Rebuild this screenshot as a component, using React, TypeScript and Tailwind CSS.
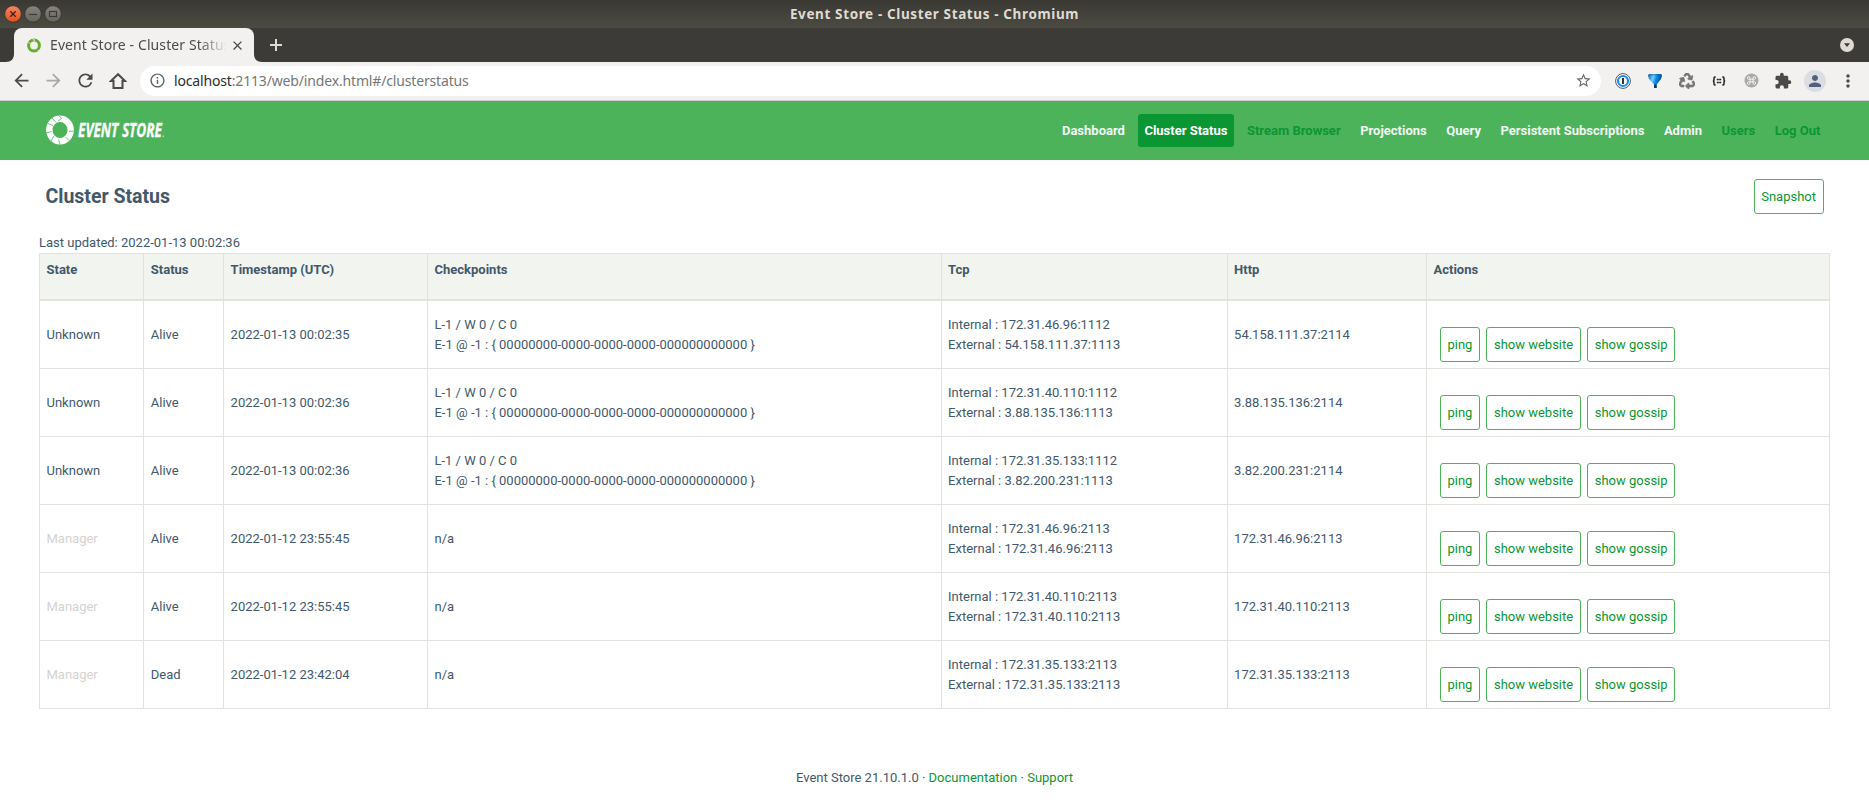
import React from "react";
import { FaRecycle } from "react-icons/fa";
import {
  MdArrowBack,
  MdArrowForward,
  MdClose,
  MdExtension,
  MdInfoOutline,
  MdMoreVert,
  MdPerson,
  MdRefresh,
  MdStarBorder,
} from "react-icons/md";

interface NodeRow {
  state: string;
  status: string;
  timestamp: string;
  checkpoints: string[];
  internal: string;
  external: string;
  http: string;
}

const epoch = "E-1 @ -1 : { 00000000-0000-0000-0000-000000000000 }";

const rows: NodeRow[] = [
  {
    state: "Unknown",
    status: "Alive",
    timestamp: "2022-01-13 00:02:35",
    checkpoints: ["L-1 / W 0 / C 0", epoch],
    internal: "172.31.46.96:1112",
    external: "54.158.111.37:1113",
    http: "54.158.111.37:2114",
  },
  {
    state: "Unknown",
    status: "Alive",
    timestamp: "2022-01-13 00:02:36",
    checkpoints: ["L-1 / W 0 / C 0", epoch],
    internal: "172.31.40.110:1112",
    external: "3.88.135.136:1113",
    http: "3.88.135.136:2114",
  },
  {
    state: "Unknown",
    status: "Alive",
    timestamp: "2022-01-13 00:02:36",
    checkpoints: ["L-1 / W 0 / C 0", epoch],
    internal: "172.31.35.133:1112",
    external: "3.82.200.231:1113",
    http: "3.82.200.231:2114",
  },
  {
    state: "Manager",
    status: "Alive",
    timestamp: "2022-01-12 23:55:45",
    checkpoints: ["n/a"],
    internal: "172.31.46.96:2113",
    external: "172.31.46.96:2113",
    http: "172.31.46.96:2113",
  },
  {
    state: "Manager",
    status: "Alive",
    timestamp: "2022-01-12 23:55:45",
    checkpoints: ["n/a"],
    internal: "172.31.40.110:2113",
    external: "172.31.40.110:2113",
    http: "172.31.40.110:2113",
  },
  {
    state: "Manager",
    status: "Dead",
    timestamp: "2022-01-12 23:42:04",
    checkpoints: ["n/a"],
    internal: "172.31.35.133:2113",
    external: "172.31.35.133:2113",
    http: "172.31.35.133:2113",
  },
];

const navItems = [
  { name: "Dashboard", style: "text-[#f1f9f2]" },
  { name: "Cluster Status", style: "bg-[#0a9632] text-white" },
  { name: "Stream Browser", style: "text-[#0a9632]" },
  { name: "Projections", style: "text-[#f1f9f2]" },
  { name: "Query", style: "text-[#f1f9f2]" },
  { name: "Persistent Subscriptions", style: "text-[#f1f9f2]" },
  { name: "Admin", style: "text-[#f1f9f2]" },
  { name: "Users", style: "text-[#0a9632]" },
  { name: "Log Out", style: "text-[#0a9632]" },
];

const columns = ["State", "Status", "Timestamp (UTC)", "Checkpoints", "Tcp", "Http", "Actions"];

const gridCols = "grid grid-cols-[104.3px_79.8px_203.9px_513.6px_286px_199.4px_403px]";

const WindowBar = () => (
  <div className="h-7 flex items-center bg-linear-to-b from-[#393833] to-[#4c4b43] relative">
    <svg width="64" height="28" viewBox="0 0 64 28">
      <defs>
        <linearGradient id="close" x1="0" y1="0" x2="0" y2="1">
          <stop offset="0" stopColor="#f58763" />
          <stop offset="1" stopColor="#e24f1c" />
        </linearGradient>
        <linearGradient id="plain" x1="0" y1="0" x2="0" y2="1">
          <stop offset="0" stopColor="#86847c" />
          <stop offset="1" stopColor="#65635c" />
        </linearGradient>
      </defs>
      <circle cx="13" cy="14" r="8.3" fill="url(#close)" stroke="#33322e" strokeWidth="0.8" />
      <path d="M10.3 11.3l5.4 5.4M15.7 11.3l-5.4 5.4" stroke="#45200f" strokeWidth="1.3" />
      <circle cx="33" cy="14" r="8.3" fill="url(#plain)" stroke="#33322e" strokeWidth="0.8" />
      <path d="M29 14.5h8" stroke="#3b3a36" strokeWidth="1.1" />
      <circle cx="53" cy="14" r="8.3" fill="url(#plain)" stroke="#33322e" strokeWidth="0.8" />
      <rect x="49.5" y="11.5" width="7" height="5" fill="none" stroke="#3b3a36" strokeWidth="1.1" />
    </svg>
    <div className="absolute inset-0 flex items-center justify-center font-['Noto_Sans'] font-bold text-[13.5px] tracking-[0.62px] text-[#dfdbd2]">
      Event Store - Cluster Status - Chromium
    </div>
  </div>
);

const TabStrip = () => (
  <div className="h-[34px] bg-[#3c3b37] flex items-end">
    <svg width="14" height="8" viewBox="0 0 14 8">
      <path d="M14 0v8H6c5 0 8-3 8-8z" fill="#f2f1f0" />
    </svg>
    <div className="w-[240px] h-[34px] rounded-t-[8px] bg-[#f2f1f0] flex items-center pl-[13px]">
      <svg width="14" height="16" viewBox="0 0 14 16">
        <circle cx="7" cy="8.5" r="5.4" fill="none" stroke="#67ad2b" strokeWidth="3" />
        <path d="M5 1.6l3 1.5-2 1.4M1 5.5l2.6 1M10.8 12.5l1.2 1.6" stroke="#f2f1f0" strokeWidth="0.7" fill="none" />
      </svg>
      <div className="ml-[9px] mb-[2px] w-[176px] overflow-hidden whitespace-nowrap font-['Noto_Sans'] text-[14px] tracking-[0.1px] text-[#4c4c4c] [mask-image:linear-gradient(to_right,black_148px,transparent_177px)]">
        Event Store - Cluster Status
      </div>
      <MdClose className="ml-[4px] text-[#4a4a4a]" size={15} />
    </div>
    <svg width="8" height="8" viewBox="0 0 8 8">
      <path d="M0 0v8h8C3 8 0 5 0 0z" fill="#f2f1f0" />
    </svg>
    <svg className="mb-[11px] ml-2" width="12" height="12" viewBox="0 0 12 12">
      <path d="M6 0v12M0 6h12" stroke="#dfdbd2" strokeWidth="2" />
    </svg>
    <svg className="ml-auto mr-[15px] mb-[10px]" width="14" height="14" viewBox="0 0 14 14">
      <circle cx="7" cy="7" r="7" fill="#dfdbd2" />
      <path d="M4 5.2h6L7 9z" fill="#3c3b37" />
    </svg>
  </div>
);

const Toolbar = () => (
  <div className="h-[39px] bg-[#f2f1f0] border-b border-[#cfcecc] flex items-center pb-px text-[#4a4a4a]">
    <MdArrowBack className="ml-[11px]" size={21} />
    <MdArrowForward className="ml-[11px] text-[#a9a8a7]" size={21} />
    <MdRefresh className="ml-[11px]" size={21} />
    <svg className="ml-[13px]" width="18" height="18" viewBox="0 0 18 18">
      <path d="M9 2.2L2 9h2.5v7h9V9H16z" fill="none" stroke="#4a4a4a" strokeWidth="2" />
    </svg>
    <div className="ml-[13px] w-[1461px] h-[30px] rounded-full bg-white flex items-center">
      <MdInfoOutline className="ml-[9px] text-[#5f6368]" size={17} />
      <div className="ml-[8px] font-['Noto_Sans'] text-[14px] tracking-[-0.16px] text-[#767676]">
        <span className="text-[#2b2b2b]">localhost</span>:2113/web/index.html#/clusterstatus
      </div>
      <MdStarBorder className="ml-auto mr-[9px] text-[#6a6a6a]" size={17} />
    </div>
    <svg className="ml-[14px]" width="16" height="16" viewBox="0 0 16 16">
      <circle cx="8" cy="8" r="7.4" fill="#fff" stroke="#56595c" strokeWidth="1" />
      <circle cx="8" cy="8" r="5" fill="#fff" stroke="#1a8cff" strokeWidth="2.2" />
      <rect x="7" y="5" width="2" height="6" fill="#333" />
    </svg>
    <svg className="ml-4" width="16" height="16" viewBox="0 0 16 16">
      <defs>
        <linearGradient id="gem" x1="0" y1="0" x2="1" y2="0.3">
          <stop offset="0" stopColor="#0a5fb4" />
          <stop offset="0.4" stopColor="#6fd0ff" />
          <stop offset="0.62" stopColor="#0d8df0" />
          <stop offset="1" stopColor="#05407f" />
        </linearGradient>
      </defs>
      <path d="M2.5 1h11q1.500 0 1.500 1.700L14 6l-4.300 5.500V15H7v-3.500L2 6 1 2.700Q1 1 2.500 1z" fill="url(#gem)" />
      <path d="M2.500 1h11L15 2.500H1z" fill="#0b3e77" opacity="0.35" />
      <path d="M7.200 11.500h2.300V15H7.200z" fill="#14304f" />
    </svg>
    <FaRecycle className="ml-4 text-[#767676] stroke-[#767676] [stroke-width:22px]" size={16} />
    <svg className="ml-[17px]" width="14" height="10" viewBox="0 0 14 10" fill="none" stroke="#222">
      <path
        d="M3.7 1H2.9Q2 1 2 2v2Q2 5 .8 5 2 5 2 6v2Q2 9 2.9 9h.8M10.3 1h.8Q12 1 12 2v2q0 1 1.2 1Q12 5 12 6v2q0 1-.9 1h-.8"
        strokeWidth="1.5"
      />
      <path d="M4.8 3.5h4.4M4.8 6.5h4.4" strokeWidth="1.4" strokeDasharray="2 .4" />
    </svg>
    <svg className="ml-[18px]" width="15" height="15" viewBox="0 0 15 15">
      <circle cx="7.5" cy="7.5" r="7" fill="#a9a9a9" />
      <path
        d="M6 6V5a1.300 1.300 0 1 0-1.300 1.200h5.600A1.300 1.300 0 1 0 9 5v5a1.300 1.300 0 1 0 1.300-1.200H4.700A1.300 1.300 0 1 0 6 10z"
        fill="none"
        stroke="#f2f1f0"
        strokeWidth="1"
      />
    </svg>
    <MdExtension className="ml-[15px]" size={18} />
    <div className="ml-[12px] size-[22px] rounded-full bg-[#dadde3] flex items-center justify-center">
      <MdPerson className="text-[#526079]" size={18} />
    </div>
    <MdMoreVert className="ml-[12px]" size={20} />
  </div>
);

const Logo = () => (
  <svg className="mb-[2px] overflow-visible" width="122" height="32" viewBox="0 0 122 32">
    <ellipse cx="15" cy="16" rx="10.7" ry="11.2" fill="none" stroke="#fff" strokeWidth="6.4" />
    <path
      d="M7 4l4 4.500M3 9.500l5 2M1 19l5.500-1.500M6 27l3-5M15 30.500l-1.500-5M24 26.500l-3.500-3.500M28.500 17l-4.500.5M13.500 1l3 3.500-3.500 2.500"
      fill="none"
      stroke="#4db35b"
      strokeWidth="0.8"
    />
    <text
      x="33"
      y="23"
      textLength="84"
      lengthAdjust="spacingAndGlyphs"
      fill="#fff"
      stroke="#fff"
      strokeWidth="0.3"
      className="font-['Open_Sans'] font-bold italic text-[19px]"
    >
      EVENT STORE
    </text>
    <circle cx="118.3" cy="22.3" r="0.8" fill="#fff" opacity="0.7" />
  </svg>
);

const Button = ({ name }: { name: string }) => (
  <button className="h-[35px] px-[6.5px] border border-[#4db35b] rounded-[3px] text-[#0a9632] leading-5">
    {name}
  </button>
);

const Cell = ({ children, muted }: { children: React.ReactNode; muted?: boolean }) => (
  <div
    className={`border-l border-[#e2e3de] pl-[6.5px] flex flex-col justify-center ${muted ? "text-[#d3d3d3]" : ""}`}
  >
    {children}
  </div>
);

const App = () => {
  return (
    <div className="w-full h-[800px] overflow-hidden bg-white">
      <WindowBar />
      <TabStrip />
      <Toolbar />
      <div className="font-['Roboto',sans-serif] text-[13px] leading-5 text-[#42586b]">
        <header className="h-[59px] bg-[#4db35b] flex items-center justify-between pl-[45px] pr-[42.2px]">
          <Logo />
          <nav className="flex gap-[6.5px] font-bold">
            {navItems.map((item) => (
              <a key={item.name} className={`h-[33px] px-[6.5px] leading-[33px] rounded-[3px] ${item.style}`}>
                {item.name}
              </a>
            ))}
          </nav>
        </header>

        <main className="w-[1791px] ml-[39px]">
          <div className="pt-[19px] px-[6.5px] flex justify-between">
            <h1 className="text-[19.5px] font-bold leading-[35px]">Cluster Status</h1>
            <Button name="Snapshot" />
          </div>
          <div className="mt-[19px]">Last updated: 2022-01-13 00:02:36</div>

          <div className="border-r border-t border-[#e2e3de]">
            <div className={`${gridCols} h-[47px] bg-[#f1f4ef] border-b-2 border-[#e2e3de] font-bold`}>
              {columns.map((col) => (
                <div key={col} className="border-l border-[#e2e3de] pl-[6.5px] pt-[6px]">
                  {col}
                </div>
              ))}
            </div>
            {rows.map((row, i) => (
              <div key={i} className={`${gridCols} h-[68px] border-b border-[#e2e3de]`}>
                <Cell muted={row.state === "Manager"}>{row.state}</Cell>
                <Cell>{row.status}</Cell>
                <Cell>{row.timestamp}</Cell>
                <Cell>
                  {row.checkpoints.map((line) => (
                    <span key={line}>{line}</span>
                  ))}
                </Cell>
                <Cell>
                  <span>Internal : {row.internal}</span>
                  <span>External : {row.external}</span>
                </Cell>
                <Cell>{row.http}</Cell>
                <Cell>
                  <div className="flex gap-[6.5px] pl-[6.5px] pt-[20px]">
                    <Button name="ping" />
                    <Button name="show website" />
                    <Button name="show gossip" />
                  </div>
                </Cell>
              </div>
            ))}
          </div>
        </main>

        <footer className="mt-[59px] text-center">
          Event Store 21.10.1.0 · <a className="text-[#0a9632]">Documentation</a> ·{" "}
          <a className="text-[#0a9632]">Support</a>
        </footer>
      </div>
    </div>
  );
};

export default App;
